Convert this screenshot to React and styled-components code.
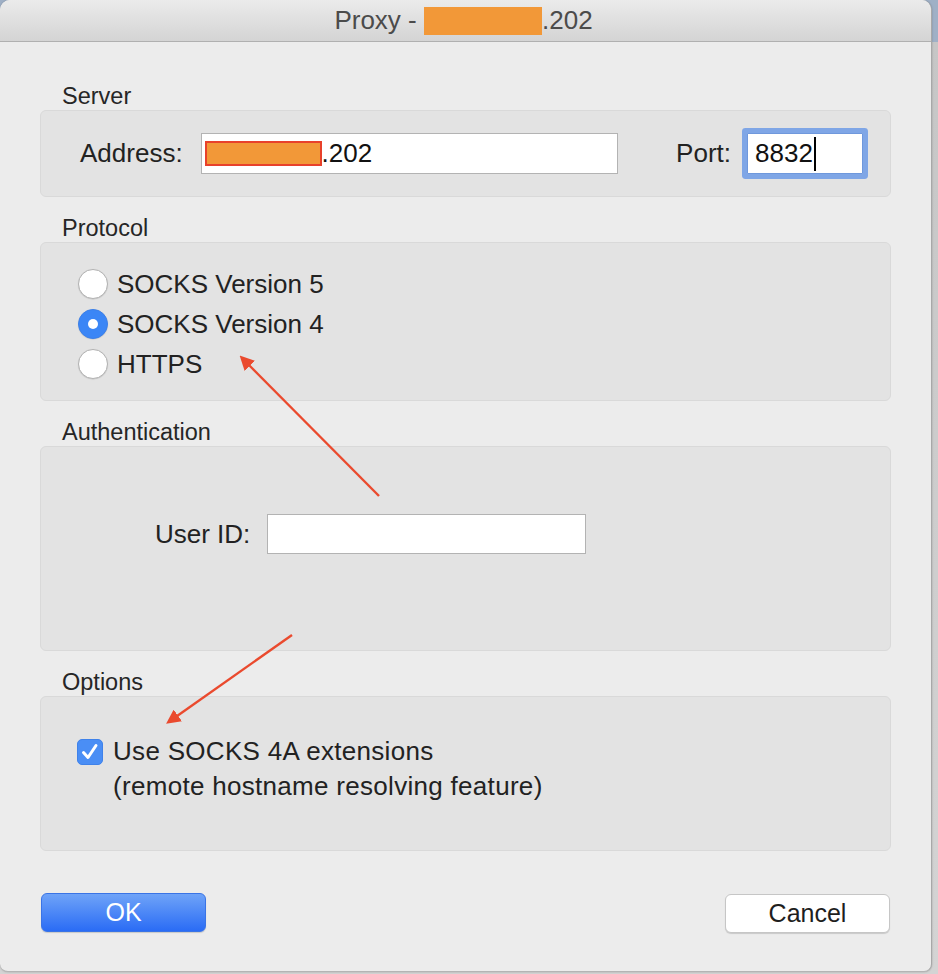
import React from 'react';
import styled, { createGlobalStyle } from 'styled-components';

const GlobalStyle = createGlobalStyle`
  html, body {
    margin: 0;
    padding: 0;
  }
  body {
    width: 938px;
    height: 974px;
    overflow: hidden;
    background: linear-gradient(#9fb0c6 0, #9fb0c6 42px, #c6c6c6 42px, #d4d4d4 100%);
    font-family: "Liberation Sans", Arial, sans-serif;
  }
`;

const Window = styled.div`
  position: relative;
  width: 932px;
  height: 972px;
  box-sizing: border-box;
  background: #ececec;
  border-radius: 10px 10px 8px 8px;
  border-right: 1px solid #a8a8a8;
  border-bottom: 1px solid #b4b4b4;
  box-shadow: 0 0 2px rgba(0, 0, 0, 0.25);
  overflow: hidden;
  display: flex;
  flex-direction: column;
`;

const TitleBar = styled.div`
  height: 41px;
  flex-shrink: 0;
  background: linear-gradient(#ebebeb, #d4d4d4);
  border-bottom: 1px solid #b0b0b0;
  display: flex;
  align-items: center;
  justify-content: center;
  padding-right: 4px;
  font-size: 26px;
  color: #4b4b4b;
`;

const Redacted = styled.span`
  display: inline-block;
  box-sizing: border-box;
  width: ${p => p.w}px;
  height: ${p => p.h}px;
  background: #f29838;
  border: ${p => (p.outlined ? '2px solid #e8412b' : 'none')};
`;

const Content = styled.div`
  padding: 42px 40px 0 40px;
  display: flex;
  flex-direction: column;
`;

const Section = styled.div`
  margin-top: ${p => (p.first ? 0 : 19)}px;
`;

const SectionLabel = styled.div`
  height: 24px;
  line-height: 24px;
  padding-left: 22px;
  margin-bottom: 2px;
  font-size: 23.5px;
  color: #262626;
`;

const Box = styled.div`
  box-sizing: border-box;
  height: ${p => p.h}px;
  background: #e3e3e3;
  border: 1px solid #d9d9d9;
  border-radius: 6px;
  color: #222;
  font-size: 26px;
`;

const ServerRow = styled(Box)`
  display: flex;
  align-items: center;
  padding: 0 27px 0 39px;
`;

const FieldLabel = styled.span`
  color: #222;
  font-size: 26px;
  margin-right: ${p => p.gap}px;
`;

const TextField = styled.div`
  box-sizing: border-box;
  width: ${p => p.w}px;
  height: ${p => p.h}px;
  background: #fff;
  border: 1px solid #b3b3b3;
  display: flex;
  align-items: center;
  padding-left: 3px;
  font-size: 26px;
  color: #111;
`;

const PortGroup = styled.div`
  margin-left: auto;
  display: flex;
  align-items: center;
`;

const FocusField = styled.div`
  box-sizing: border-box;
  width: 116px;
  height: 41px;
  background: #fff;
  border: 1px solid #6f98dc;
  border-radius: 1px;
  box-shadow: 0 0 0 5px #7fa6e6;
  display: flex;
  align-items: center;
  padding-left: 7px;
  font-size: 26px;
  color: #111;
`;

const Caret = styled.span`
  display: inline-block;
  width: 2px;
  height: 34px;
  background: #000;
  margin-left: 1px;
`;

const ProtocolBox = styled(Box)`
  padding: 21px 0 0 37px;
  display: flex;
  flex-direction: column;
`;

const RadioRow = styled.div`
  height: 40px;
  display: flex;
  align-items: center;
  gap: 9px;
`;

const Radio = styled.span`
  box-sizing: border-box;
  width: 30px;
  height: 30px;
  border-radius: 50%;
  display: flex;
  align-items: center;
  justify-content: center;
  background: ${p => (p.checked ? '#3b86f6' : '#fff')};
  border: 1px solid ${p => (p.checked ? '#3b80ea' : '#b2b2b2')};
  box-shadow: 0 0.5px 1px rgba(0, 0, 0, 0.15);

  &::after {
    content: '';
    display: ${p => (p.checked ? 'block' : 'none')};
    width: 10px;
    height: 10px;
    border-radius: 50%;
    background: #fff;
  }
`;

const AuthBox = styled(Box)`
  padding: 67px 0 0 114px;
  display: flex;
  align-items: flex-start;
`;

const AuthRow = styled.div`
  display: flex;
  align-items: center;
  height: 40px;
`;

const OptionsBox = styled(Box)`
  padding: 37px 0 0 36px;
  display: flex;
  align-items: flex-start;
  gap: 10px;
`;

const Checkbox = styled.span`
  box-sizing: border-box;
  flex-shrink: 0;
  width: 26px;
  height: 26px;
  margin-top: 5px;
  border-radius: 5px;
  background: #4a8ef5;
  border: 1px solid #3f82ea;
  display: flex;
  align-items: center;
  justify-content: center;
`;

const OptionText = styled.div`
  line-height: 35px;
  font-size: 26px;
  letter-spacing: 0.3px;
  color: #222;
`;

const ButtonRow = styled.div`
  margin-top: 42px;
  padding: 0 1px;
  display: flex;
  justify-content: space-between;
  align-items: flex-start;
`;

const Button = styled.button`
  box-sizing: border-box;
  width: 165px;
  height: 39px;
  margin-top: ${p => (p.primary ? 0 : 1)}px;
  border-radius: 6px;
  font-family: "Liberation Sans", Arial, sans-serif;
  font-size: 25px;
  padding: 0;
  color: ${p => (p.primary ? '#fff' : '#1e1e1e')};
  background: ${p => (p.primary ? 'linear-gradient(#6fa3f8, #2a6cf5)' : '#fff')};
  border: 1px solid ${p => (p.primary ? '#3a74e6' : '#c6c6c6')};
  box-shadow: 0 1px 1px rgba(0, 0, 0, 0.15);
`;

const Overlay = styled.svg`
  position: absolute;
  left: 0;
  top: 0;
  pointer-events: none;
`;

const arrows = [
  { x1: 379, y1: 496, x2: 243, y2: 359 },
  { x1: 292, y1: 635, x2: 170, y2: 721 },
];

function Arrows() {
  return (
    <Overlay width="932" height="972" viewBox="0 0 932 972">
      <defs>
        <marker id="head" markerWidth="6" markerHeight="6" refX="4" refY="3" orient="auto" markerUnits="strokeWidth">
          <path d="M0,0 L6,3 L0,6 z" fill="#ea4a2e" />
        </marker>
      </defs>
      {arrows.map((a, i) => (
        <line key={i} {...a} stroke="#ea4a2e" strokeWidth="2.4" markerEnd="url(#head)" />
      ))}
    </Overlay>
  );
}

const protocols = [
  { label: 'SOCKS Version 5', checked: false },
  { label: 'SOCKS Version 4', checked: true },
  { label: 'HTTPS', checked: false },
];

export default function App() {
  return (
    <>
      <GlobalStyle />
      <Window>
        <TitleBar>
          <span style={{ whiteSpace: 'pre' }}>Proxy - </span>
          <Redacted w={118} h={28} />
          <span>.202</span>
        </TitleBar>
        <Content>
          <Section first>
            <SectionLabel>Server</SectionLabel>
            <ServerRow h={87}>
              <FieldLabel gap={18}>Address:</FieldLabel>
              <TextField w={417} h={41}>
                <Redacted w={117} h={25} outlined />
                <span>.202</span>
              </TextField>
              <PortGroup>
                <FieldLabel gap={16}>Port:</FieldLabel>
                <FocusField>
                  8832
                  <Caret />
                </FocusField>
              </PortGroup>
            </ServerRow>
          </Section>

          <Section>
            <SectionLabel>Protocol</SectionLabel>
            <ProtocolBox h={159}>
              {protocols.map(p => (
                <RadioRow key={p.label}>
                  <Radio checked={p.checked} />
                  <span>{p.label}</span>
                </RadioRow>
              ))}
            </ProtocolBox>
          </Section>

          <Section>
            <SectionLabel>Authentication</SectionLabel>
            <AuthBox h={205}>
              <AuthRow>
                <FieldLabel gap={17}>User ID:</FieldLabel>
                <TextField w={319} h={40} />
              </AuthRow>
            </AuthBox>
          </Section>

          <Section>
            <SectionLabel>Options</SectionLabel>
            <OptionsBox h={155}>
              <Checkbox>
                <svg width="20" height="20" viewBox="0 0 20 20">
                  <path d="M3.5 10.5 L8 15.5 L16 3.5" fill="none" stroke="#fff" strokeWidth="3" strokeLinecap="round" strokeLinejoin="round" />
                </svg>
              </Checkbox>
              <OptionText>
                Use SOCKS 4A extensions
                <br />
                (remote hostname resolving feature)
              </OptionText>
            </OptionsBox>
          </Section>

          <ButtonRow>
            <Button primary>OK</Button>
            <Button>Cancel</Button>
          </ButtonRow>
        </Content>
        <Arrows />
      </Window>
    </>
  );
}
